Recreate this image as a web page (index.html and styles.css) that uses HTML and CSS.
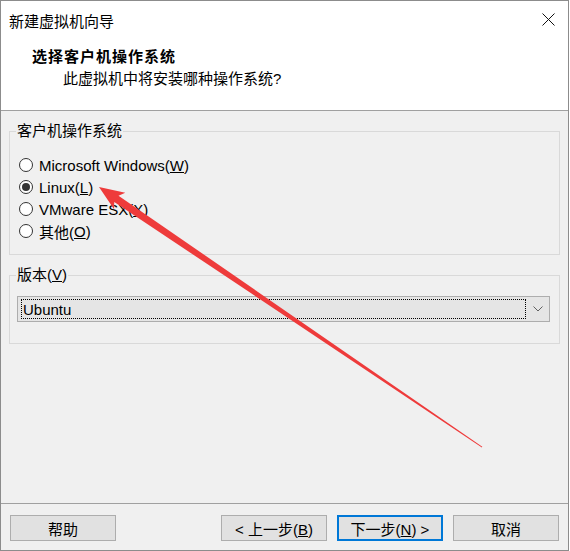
FILE: index.html
```html
<!DOCTYPE html>
<html lang="zh-CN">
<head>
  <meta charset="UTF-8">
  <title>新建虚拟机向导</title>
  <link rel="stylesheet" href="styles.css">
</head>
<body>

  <div class="window">
    <div class="titlebar">
      <span class="title">新建虚拟机向导</span>
      <svg class="close" width="13" height="13" viewBox="0 0 13 13">
        <path d="M0.5 0.5 L12.5 12.5 M12.5 0.5 L0.5 12.5" stroke="#111" stroke-width="1" fill="none"/>
      </svg>
    </div>

    <div class="header">
      <div class="heading">选择客户机操作系统</div>
      <div class="subheading">此虚拟机中将安装哪种操作系统?</div>
    </div>

    <div class="content">
      <fieldset class="group os-group">
        <legend>客户机操作系统</legend>
        <label class="radio"><span class="dot"></span>Microsoft Windows(<u>W</u>)</label>
        <label class="radio checked"><span class="dot"></span>Linux(<u>L</u>)</label>
        <label class="radio"><span class="dot"></span>VMware ESX(<u>X</u>)</label>
        <label class="radio"><span class="dot"></span>其他(<u>O</u>)</label>
      </fieldset>

      <fieldset class="group version-group">
        <legend>版本(<u>V</u>)</legend>
        <div class="combo">
          <span class="combo-value">Ubuntu</span>
          <svg class="chevron" width="10" height="6" viewBox="0 0 10 6">
            <polyline points="0.5,0.5 5,5 9.5,0.5" stroke="#606060" stroke-width="1" fill="none"/>
          </svg>
        </div>
      </fieldset>
    </div>

    <div class="footer">
      <button class="btn">帮助</button>
      <span class="spacer"></span>
      <button class="btn">&lt; 上一步(<u>B</u>)</button>
      <button class="btn default">下一步(<u>N</u>) &gt;</button>
      <button class="btn">取消</button>
    </div>

    <!-- red annotation arrow drawn over the dialog -->
    <svg class="annotation" width="570" height="551" viewBox="0 0 570 551">
      <polygon points="0,0 25,-10 21,-3.8 463,-0.4 463,0.4 21,3.8 25,10"
               fill="#ee3b3b" transform="translate(99,187) rotate(34.17)"/>
    </svg>
  </div>

</body>
</html>
```

FILE: styles.css
```css
body {
  margin: 0;
  background: #ffffff;
  font-family: "Liberation Sans", "Noto Sans CJK SC", sans-serif;
  font-size: 15px;
  color: #000;
}

.window {
  position: relative;
  width: 569px;
  height: 551px;
  box-sizing: border-box;
  border: 1px solid #8c8c8c;
  background: #f0f0f0;
  display: flex;
  flex-direction: column;
}

.titlebar {
  height: 38px;
  background: #fff;
  display: flex;
  align-items: center;
  padding: 0 13px 0 8px;
}

.title {
  flex: 1;
}

.close {
  margin-top: -2px;
}

.header {
  height: 72px;
  box-sizing: border-box;
  background: #fff;
  border-bottom: 1px solid #a0a0a0;
  padding: 7px 0 0 31px;
}

.heading {
  font-weight: bold;
  line-height: 22px;
  letter-spacing: 1px;
}

.subheading {
  line-height: 22px;
  padding-left: 31px;
}

.content {
  flex: 1;
}

.group {
  margin: 0 8px;
  padding: 0;
  border: 1px solid #d9d9d9;
  min-width: 0;
}

.group legend {
  margin-left: 6px;
  padding: 0 1px;
  line-height: 20px;
}

.os-group {
  margin-top: 10px;
  padding: 13px 0 12px;
}

.version-group {
  margin-top: 10px;
  padding: 11px 0 21px;
}

.radio {
  display: flex;
  align-items: center;
  height: 22px;
}

.dot {
  width: 14px;
  height: 14px;
  box-sizing: border-box;
  border: 1px solid #333;
  border-radius: 50%;
  background: #fff;
  margin: 0 6px 0 9px;
  display: flex;
  align-items: center;
  justify-content: center;
}

.radio.checked .dot::after {
  content: "";
  width: 8px;
  height: 8px;
  border-radius: 50%;
  background: #333;
}

.combo {
  margin: 0 9px 0 7px;
  height: 26px;
  box-sizing: border-box;
  border: 1px solid #adadad;
  background: #e5e5e5;
  display: flex;
  align-items: center;
  padding: 0 6px 0 3px;
}

.combo-value {
  flex: 1;
  height: 20px;
  line-height: 20px;
  box-sizing: border-box;
  border: 1px dotted #000;
  padding-left: 1px;
  margin-right: 7px;
}

.chevron {
  flex: none;
}

.footer {
  height: 47px;
  box-sizing: border-box;
  border-top: 1px solid #a0a0a0;
  padding: 11px 9px 0 9px;
  display: flex;
  align-items: flex-start;
  gap: 10px;
}

.spacer {
  flex: 1;
}

.btn {
  width: 106px;
  height: 26px;
  margin: 0;
  padding: 0;
  border: 1px solid #adadad;
  background: #e1e1e1;
  font-family: inherit;
  font-size: 15px;
  color: #000;
}

.btn.default {
  border-color: #0078d7;
  box-shadow: inset 0 0 0 1px #0078d7;
}

.annotation {
  position: absolute;
  top: -1px;
  left: -1px;
  pointer-events: none;
}
```
